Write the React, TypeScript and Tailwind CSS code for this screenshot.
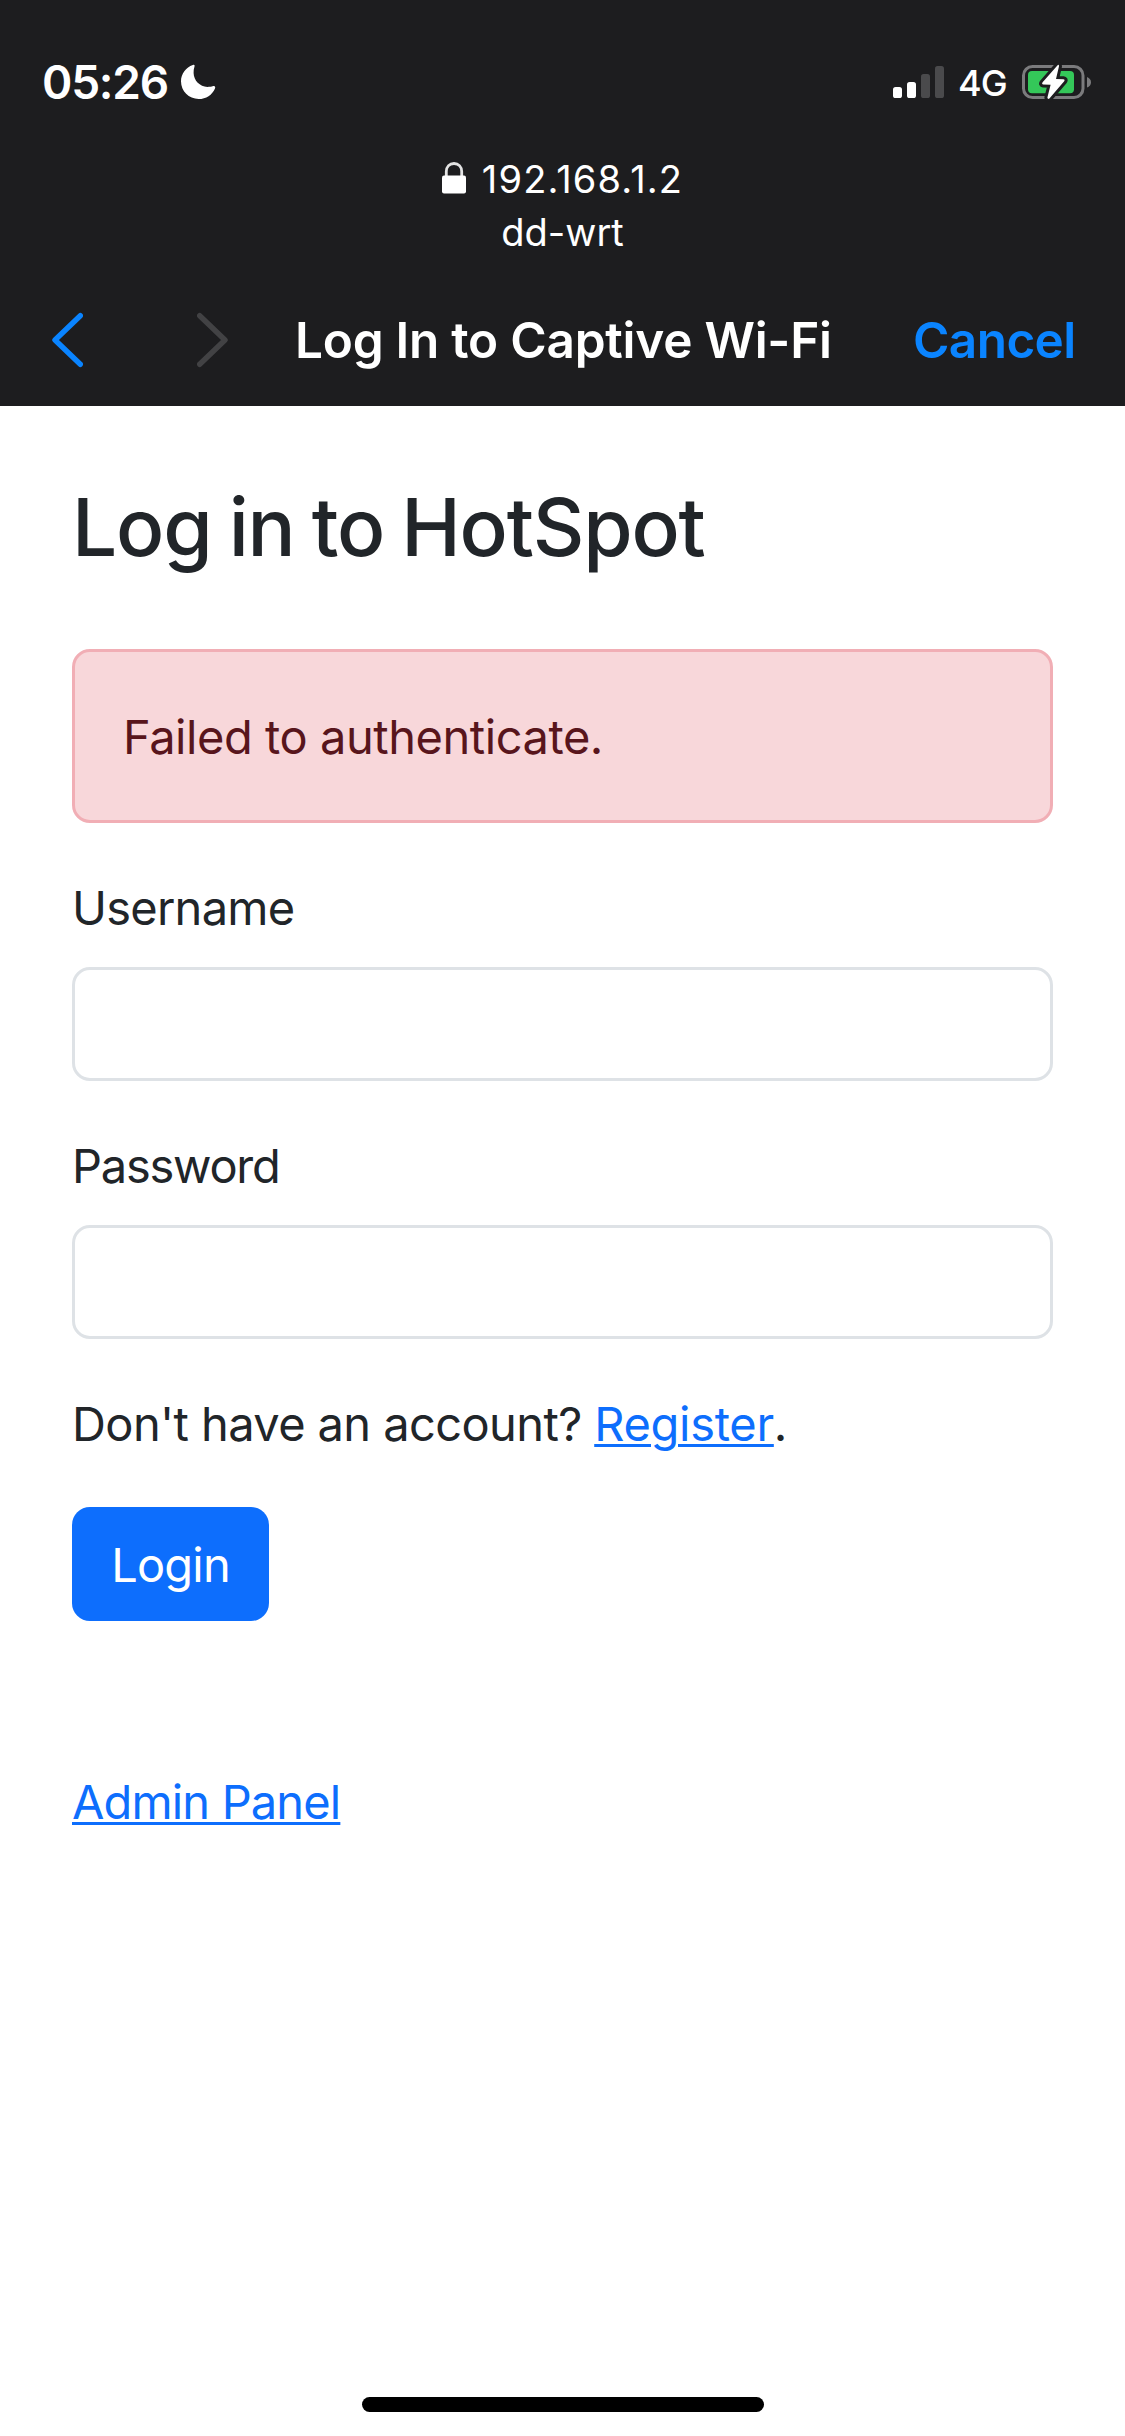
function MoonIcon() {
  return (
    <svg className="ml-[12px] h-[36px] w-[36px]" viewBox="0 0 36 36" fill="#fff">
      <path d="M12.8 .9C6 3.2 1 9.6 1 17.3C1 27.2 8.8 35 18.7 35C26 35 32.3 30.8 35 24.4C35.7 22.8 34.8 21.6 33.2 22.1C31.4 22.7 29.6 22.9 27.4 22.9C19.8 22.5 13.8 16.6 13.6 9C13.5 6.8 13.8 4.6 14.5 2.6C15 1.2 14.2 .4 12.8 .9Z" />
    </svg>
  );
}

function SignalIcon() {
  return (
    <svg className="h-[34px] w-[52px]" viewBox="0 0 52 34">
      <rect x="0" y="22" width="9" height="11" rx="2.6" fill="#fff" />
      <rect x="14" y="17" width="9" height="16" rx="2.6" fill="#fff" />
      <rect x="28" y="9" width="9" height="24" rx="2.6" fill="#4a4a4c" />
      <rect x="42" y="1" width="9" height="32" rx="2.6" fill="#4a4a4c" />
    </svg>
  );
}

function BatteryIcon() {
  const bolt = "M37.6 3.2L22.4 20.6Q21.4 22.4 23.2 22.6L30.6 22.8L27.4 35.6Q27.6 37.6 29.4 36.6L44.4 19Q45.2 17.4 43.4 17.2L36 17L39 4.2Q39 2.2 37.6 3.2Z";
  return (
    <svg className="h-[40px] w-[72px]" viewBox="0 0 72 40">
      <rect x="3.5" y="4.5" width="59.5" height="31" rx="9" fill="none" stroke="#7b7b7d" strokeWidth="3" />
      <path d="M67 15C69.6 16 71 18 71 20.2C71 22.6 69.6 24.5 67 25.5Z" fill="#7b7b7d" />
      <rect x="8" y="9" width="46" height="22.3" rx="4" fill="#34c759" />
      <path d={bolt} fill="#fff" stroke="#1d1d1f" strokeWidth="6" strokeLinejoin="round" />
      <path d={bolt} fill="#fff" />
    </svg>
  );
}

function LockIcon() {
  return (
    <svg className="mb-[3px] h-[32px] w-[24px]" viewBox="0 0 24 32">
      <path d="M4.3 15V9.6C4.3 4.6 7.6 1.5 12 1.5S19.7 4.6 19.7 9.6V15" fill="none" stroke="#e4e4e4" strokeWidth="2.8" />
      <rect x="0" y="13.5" width="24" height="18" rx="2" fill="#fff" />
    </svg>
  );
}

function Chevron({ className, d }: { className: string; d: string }) {
  return (
    <svg className={className} viewBox="0 0 31 60" fill="none" stroke="currentColor" strokeWidth="5.4" strokeLinecap="round" strokeLinejoin="round">
      <path d={d} />
    </svg>
  );
}

function Field({ id, label, type, tracking }: { id: string; label: string; type: string; tracking: string }) {
  return (
    <div className="mb-12 flex flex-col gap-6">
      <label htmlFor={id} className={`h-[72px] leading-[74px] ${tracking}`}>
        {label}
      </label>
      <input id={id} type={type} className="h-[114px] w-full rounded-[18px] border-3 border-[#dee2e6] bg-white px-9 outline-none" />
    </div>
  );
}

export default function App() {
  return (
    <div className="flex h-[2436px] w-[1125px] flex-col overflow-hidden bg-white font-['Inter',sans-serif] text-[#212529]">
      <header className="flex h-[406px] shrink-0 flex-col bg-[#1d1d1f] pt-[57px] text-white">
        <div className="flex h-[50px] items-center justify-between pr-[33px] pl-[42px]">
          <div className="flex items-center">
            <span className="w-[126px] text-[46px] leading-[50px] font-semibold tracking-[-1.2px] whitespace-nowrap">05:26</span>
            <MoonIcon />
          </div>
          <div className="flex items-center">
            <SignalIcon />
            <span className="ml-[13px] w-[47px] pt-[2px] text-[36px] leading-[50px] font-medium tracking-[-1px]">4G</span>
            <span className="ml-[15px]">
              <BatteryIcon />
            </span>
          </div>
        </div>

        <div className="mt-[46px] flex flex-col items-center text-[38px] leading-[53px]">
          <div className="flex items-center gap-4">
            <LockIcon />
            <span className="tracking-[1.14px]">192.168.1.2</span>
          </div>
          <span>dd-wrt</span>
        </div>

        <nav className="mt-[37px] flex h-[88px] items-center pl-[52px] text-[49.5px] leading-[88px] font-semibold">
          <Chevron className="h-[60px] w-[31px] text-[#0a84ff]" d="M28.3 5.7L3 30L28.3 54.3" />
          <Chevron className="ml-[114px] h-[60px] w-[31px] text-[#424244]" d="M2.7 5.7L28 30L2.7 54.3" />
          <h1 className="ml-[67px] w-[618px] tracking-[-0.24px] whitespace-nowrap">Log In to Captive Wi-Fi</h1>
          <button className="tracking-[-0.6px] text-[#0a84ff]">Cancel</button>
        </nav>
      </header>

      <main className="flex grow flex-col px-[72px] pt-[71px] text-[47px]">
        <h2 className="mb-[72px] h-[100px] text-[80px] leading-[99px] font-medium tracking-[-1.2px] [word-spacing:-3px] whitespace-nowrap">
          Log in to HotSpot
        </h2>

        <div role="alert" className="mb-12 h-[174px] rounded-[18px] border-3 border-[#f1aeb5] bg-[#f8d7da] px-12 py-12 leading-[74px] tracking-[-0.45px] text-[#58151c]">
          Failed to authenticate.
        </div>

        <Field id="username" label="Username" type="text" tracking="tracking-[-0.75px]" />
        <Field id="password" label="Password" type="password" tracking="tracking-[-1.25px]" />

        <p className="mb-12 h-[72px] leading-[74px] tracking-[-0.6px] whitespace-nowrap">
          Don't have an account?{" "}
          <a href="#register" className="tracking-[-0.3px] text-[#0d6efd] underline decoration-3 underline-offset-[3px]">
            Register
          </a>
          .
        </p>

        <button className="h-[114px] w-[197px] rounded-[18px] bg-[#0d6efd] pt-[2px] tracking-[-0.8px] text-white">Login</button>

        <a href="#admin" className="mt-36 h-[72px] self-start leading-[74px] tracking-[-0.85px] text-[#0d6efd] underline decoration-3 underline-offset-[3px]">
          Admin Panel
        </a>
      </main>

      <footer className="flex shrink-0 justify-center pb-6">
        <div className="h-[15px] w-[402px] rounded-full bg-black" />
      </footer>
    </div>
  );
}
